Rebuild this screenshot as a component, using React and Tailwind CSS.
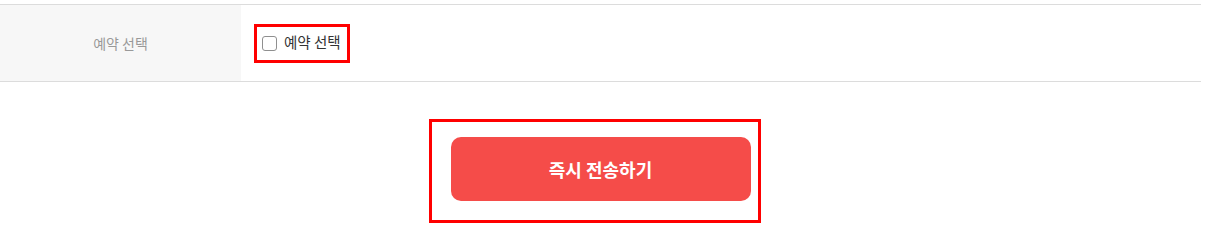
import React, { useState } from 'react'

const font = { fontFamily: '"Noto Sans CJK KR", "Noto Sans", sans-serif' }

export default function App() {
  const [reserve, setReserve] = useState(false)

  return (
    <div className="w-[1201px] bg-white pt-1 pb-[30px] text-[14px]" style={font}>
      <div className="flex h-[78px] border-y border-[#dcdcdc]">
        <div className="flex w-[241px] shrink-0 items-center justify-center bg-[#f7f7f7] text-[#999]">
          예약 선택
        </div>
        <div className="flex items-center pl-[13px]">
          <label className="relative flex h-[39px] items-center gap-[7px] pl-[8px] pr-[9px] text-[#333]">
            <span className="pointer-events-none absolute inset-0 border-[3px] border-[#ff0000]" />
            <input
              type="checkbox"
              checked={reserve}
              onChange={(e) => setReserve(e.target.checked)}
              className="h-[15px] w-[15px] appearance-none rounded-[3px] border border-[#8f8f8f] bg-white"
            />
            <span className="-mt-[2px] text-[14.5px]">예약 선택</span>
          </label>
        </div>
      </div>

      <div className="flex justify-center pt-[55px]">
        <div className="relative">
          <span className="pointer-events-none absolute top-[-18px] bottom-[-22px] left-[-22px] right-[-10px] border-[3px] border-[#ff0000]" />
          <button className="flex h-16 w-[300px] items-center justify-center rounded-[10px] bg-[#f54c49] text-[18px] font-bold text-white">
            즉시 전송하기
          </button>
        </div>
      </div>
    </div>
  )
}
